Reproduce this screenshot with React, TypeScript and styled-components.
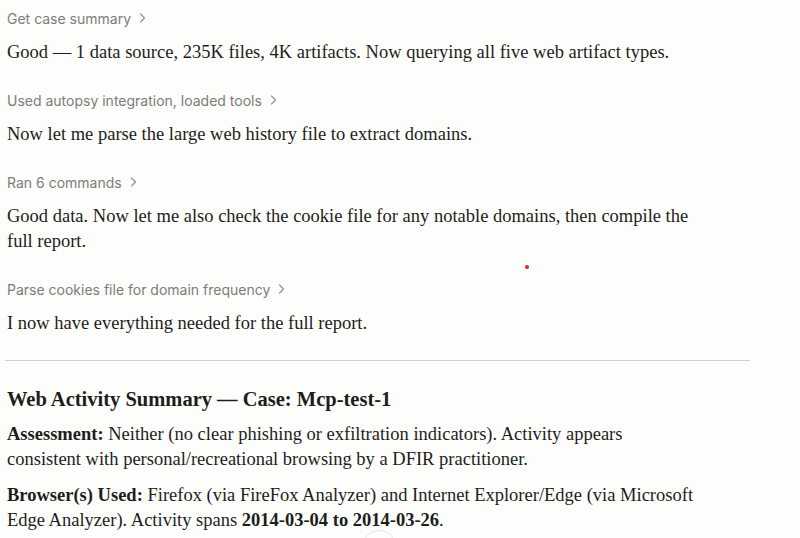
import React from "react";
import styled, { createGlobalStyle } from "styled-components";

const Global = createGlobalStyle`
  html, body { margin: 0; padding: 0; background: #fdfdfb; }
  body { overflow: hidden; }
`;

const Page = styled.div`
  position: relative;
  width: 800px;
  height: 538px;
  overflow: hidden;
  background: #fdfdfb;
  box-sizing: border-box;
  padding: 8px 50px 0 5px;
  display: flex;
  flex-direction: column;
`;

const Step = styled.section`
  display: flex;
  flex-direction: column;
  gap: 12px;
  padding-left: 2px;
  margin-bottom: 25px;
`;

const Label = styled.button`
  all: unset;
  display: inline-flex;
  align-items: center;
  gap: 8px;
  height: 20px;
  font-family: "Inter", "Liberation Sans", sans-serif;
  font-size: 14px;
  color: #7c7c7a;
  cursor: pointer;
  align-self: flex-start;
`;

const Para = styled.p`
  margin: 0;
  max-width: 690px;
  font-family: "Liberation Serif", serif;
  font-size: 18.5px;
  line-height: 25px;
  color: #1d1d1b;
`;

const Divider = styled.hr`
  border: none;
  border-top: 1px solid #cfcfcc;
  margin: -1px 0 0 0;
  width: 745px;
`;

const Report = styled.section`
  padding-left: 2px;
  padding-top: 25px;
  display: flex;
  flex-direction: column;
`;

const Heading = styled.h2`
  margin: 0 0 10px 0;
  font-family: "Liberation Serif", serif;
  font-size: 20.5px;
  line-height: 26px;
  font-weight: 700;
  color: #1d1d1b;
`;

const ReportPara = styled(Para)`
  margin-bottom: 11px;
`;

const Dot = styled.span`
  position: absolute;
  left: 525px;
  top: 265px;
  width: 4px;
  height: 4px;
  border-radius: 50%;
  background: #e8211f;
`;

const ScrollButton = styled.div`
  position: absolute;
  left: 362px;
  top: 530px;
  width: 32px;
  height: 32px;
  border-radius: 50%;
  border: 1px solid #e2e2df;
  background: #fdfdfb;
`;

const Chevron = () => (
  <svg width="7" height="10" viewBox="0 0 7 10" fill="none">
    <path d="M1.5 1 L5.5 5 L1.5 9" stroke="#8c8c8a" strokeWidth="1.1" strokeLinecap="round" strokeLinejoin="round" />
  </svg>
);

const steps = [
  {
    label: "Get case summary",
    text: "Good — 1 data source, 235K files, 4K artifacts. Now querying all five web artifact types.",
  },
  {
    label: "Used autopsy integration, loaded tools",
    text: "Now let me parse the large web history file to extract domains.",
  },
  {
    label: "Ran 6 commands",
    text: "Good data. Now let me also check the cookie file for any notable domains, then compile the full report.",
  },
  {
    label: "Parse cookies file for domain frequency",
    text: "I now have everything needed for the full report.",
  },
];

export default function App() {
  return (
    <>
      <Global />
      <Page>
        {steps.map((s) => (
          <Step key={s.label}>
            <Label>
              {s.label}
              <Chevron />
            </Label>
            <Para>{s.text}</Para>
          </Step>
        ))}
        <Divider />
        <Report>
          <Heading>Web Activity Summary — Case: Mcp-test-1</Heading>
          <ReportPara>
            <strong>Assessment:</strong> Neither (no clear phishing or exfiltration indicators). Activity appears
            consistent with personal/recreational browsing by a DFIR practitioner.
          </ReportPara>
          <ReportPara>
            <strong>Browser(s) Used:</strong> Firefox (via FireFox Analyzer) and Internet Explorer/Edge (via Microsoft
            Edge Analyzer). Activity spans <strong>2014-03-04 to 2014-03-26</strong>.
          </ReportPara>
        </Report>
        <Dot />
        <ScrollButton />
      </Page>
    </>
  );
}
